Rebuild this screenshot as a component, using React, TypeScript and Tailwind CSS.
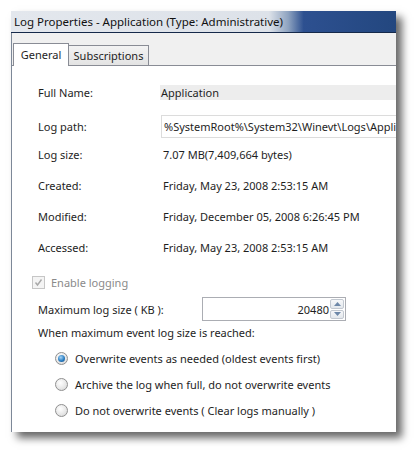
import React from 'react';

const font = { fontFamily: '"Segoe UI", "Noto Sans", "Open Sans", sans-serif' };

function Row({ label, children, className = '' }: { label: string; children: React.ReactNode; className?: string }) {
  return (
    <div className={`flex items-center ${className}`}>
      <div className="w-[122px] shrink-0 pl-[26px] box-content">{label}</div>
      <div className="flex-1 min-w-0">{children}</div>
    </div>
  );
}

function Radio({ checked, label }: { checked?: boolean; label: string }) {
  return (
    <div className="flex items-center h-[26px] pl-[43px]">
      <span className="relative w-[13px] h-[13px] rounded-full border border-[#8f8f8f] bg-[radial-gradient(circle_at_40%_35%,#ffffff_0%,#e6e6e6_60%,#cfcfcf_100%)] flex items-center justify-center">
        {checked && (
          <span className="w-[7px] h-[7px] rounded-full bg-[radial-gradient(circle_at_40%_35%,#a8d4f5_0%,#2a7fc4_55%,#14457a_100%)]" />
        )}
      </span>
      <span className="ml-[7px]">{label}</span>
    </div>
  );
}

export default function App() {
  return (
    <div className="w-[416px] h-[453px] bg-white overflow-hidden pl-[11px] pt-[11px]" style={font}>
      <div className="w-[385px] h-[421px] flex flex-col shadow-[6px_6px_8px_rgba(0,0,0,0.6)] text-[11px] text-[#1e1e1e] leading-none">
        {/* title bar */}
        <div className="h-[22px] shrink-0 flex items-center bg-[linear-gradient(to_right,#e3e7ed_0%,#dde2e9_67%,#8ea3c0_72%,#2d5090_76%,#23477f_100%)] border-b border-[#15294a]">
          <span className="pl-[3px] text-[11.5px] text-[#111]">Log Properties - Application (Type: Administrative)</span>
        </div>
        <div className="flex-1 flex flex-col bg-[#f0f0f0] border-l border-[#7d8898]">
          {/* tabs */}
          <div className="h-[32px] shrink-0 flex items-end pl-[1px] relative">
            <div className="h-[23px] w-[56px] bg-white border border-b-0 border-[#898c95] flex items-center justify-center relative z-10 -mb-px pb-[2px]">
              General
            </div>
            <div className="h-[20px] w-[80px] bg-[linear-gradient(to_bottom,#f3f3f3,#e3e3e3)] border border-l-0 border-b-0 border-[#898c95] flex items-center justify-center">
              Subscriptions
            </div>
          </div>
          {/* panel */}
          <div className="flex-1 bg-white border-t border-[#898c95] flex flex-col overflow-hidden">
            <Row label="Full Name:" className="mt-[19px] h-[15px]">
              <div className="h-[15px] bg-[#ededed] pl-[1px] flex items-center">Application</div>
            </Row>
            <Row label="Log path:" className="mt-[15px] h-[23px]">
              <div className="h-[23px] ml-[1px] bg-white border border-r-0 border-[#dcdcdc] pl-[2px] flex items-center whitespace-nowrap overflow-hidden">
                %SystemRoot%\System32\Winevt\Logs\Application.evtx
              </div>
            </Row>
            <Row label="Log size:" className="mt-[1px] h-[31px]">
              <span className="pl-[3px]">7.07 MB(7,409,664 bytes)</span>
            </Row>
            <Row label="Created:" className="h-[31px]">
              <span className="pl-[3px]">Friday, May 23, 2008 2:53:15 AM</span>
            </Row>
            <Row label="Modified:" className="h-[31px]">
              <span className="pl-[3px]">Friday, December 05, 2008 6:26:45 PM</span>
            </Row>
            <Row label="Accessed:" className="h-[31px]">
              <span className="pl-[3px]">Friday, May 23, 2008 2:53:15 AM</span>
            </Row>

            <div className="mt-[7px] h-[24px] flex items-center pl-[20px]">
              <span className="w-[13px] h-[13px] border border-[#c6c6c6] bg-[#f4f4f4] flex items-center justify-center">
                <svg width="9" height="9" viewBox="0 0 9 9">
                  <path d="M1.5 4.5 L3.5 7 L7.5 1.5" fill="none" stroke="#a8a8a8" strokeWidth="1.4" />
                </svg>
              </span>
              <span className="ml-[6px] text-[#8a8a8a]">Enable logging</span>
            </div>

            <div className="mt-[3px] h-[24px] flex items-center">
              <div className="w-[164px] shrink-0 pl-[26px] box-content">Maximum log size ( KB ):</div>
              <div className="w-[144px] h-[24px] border border-[#abadb3] bg-white flex items-stretch">
                <div className="flex-1 flex items-center justify-end pr-[1px]">20480</div>
                <div className="w-[15px] flex flex-col gap-px py-[1px] pr-[1px]">
                  <div className="flex-1 border border-[#c2c8d0] rounded-[2px] bg-[linear-gradient(to_bottom,#f7f8fa,#e3e7ec)] flex items-center justify-center">
                    <svg width="7" height="4" viewBox="0 0 7 4"><path d="M0 4 L3.5 0 L7 4 Z" fill="#6d87a8" /></svg>
                  </div>
                  <div className="flex-1 border border-[#c2c8d0] rounded-[2px] bg-[linear-gradient(to_bottom,#f7f8fa,#e3e7ec)] flex items-center justify-center">
                    <svg width="7" height="4" viewBox="0 0 7 4"><path d="M0 0 L3.5 4 L7 0 Z" fill="#6d87a8" /></svg>
                  </div>
                </div>
              </div>
            </div>

            <div className="mt-[1px] h-[20px] flex items-center pl-[26px]">When maximum event log size is reached:</div>

            <div className="mt-[3px] flex flex-col">
              <Radio checked label="Overwrite events as needed (oldest events first)" />
              <Radio label="Archive the log when full, do not overwrite events" />
              <Radio label="Do not overwrite events ( Clear logs manually )" />
            </div>
          </div>
        </div>
      </div>
    </div>
  );
}
